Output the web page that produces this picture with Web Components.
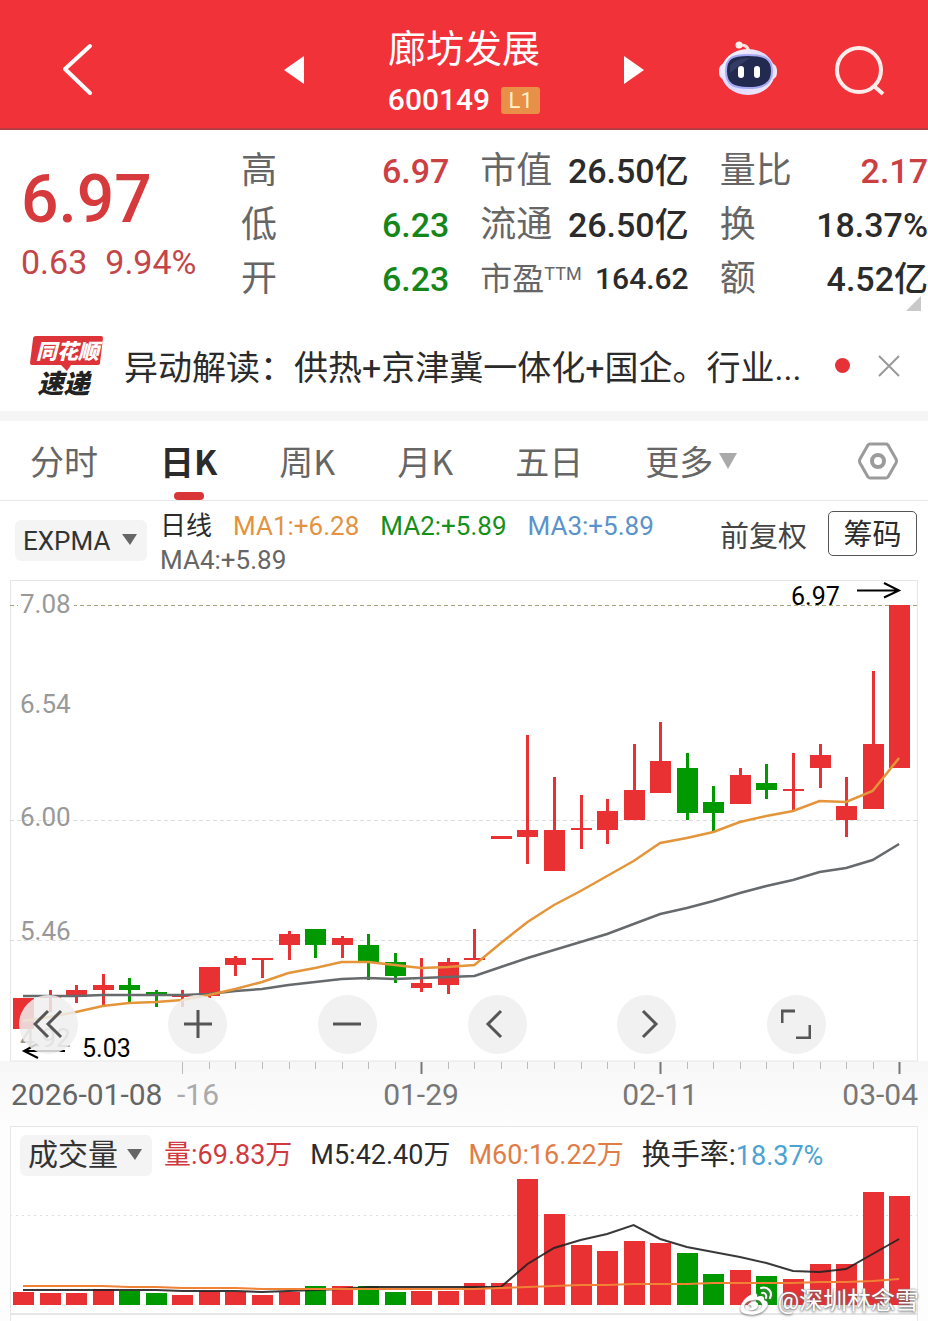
<!DOCTYPE html>
<html lang="zh-CN">
<head>
<meta charset="utf-8">
<meta name="viewport" content="width=device-width, initial-scale=1">
<title>廊坊发展 600149</title>
<style>
  body { margin: 0; background: #fff; color: #2b2b2b; font-family: Roboto, "Noto Sans CJK SC", sans-serif; }
</style>
</head>
<body>
<stock-app></stock-app>

<script>
const RED = '#e93033', GREEN = '#009a00';
const reset = `
  *, *::before { box-sizing: border-box; }
  button, select { font: inherit; color: inherit; background: none; border: 0; padding: 0; margin: 0; cursor: pointer; }
  svg { display: block; }
`;

function define(name, css, html, connected) {
  const template = document.createElement('template');
  template.innerHTML = `<style>${reset}${css}</style>${html}`;
  customElements.define(name, class extends HTMLElement {
    constructor() {
      super();
      this.attachShadow({ mode: 'open' }).append(template.content.cloneNode(true));
    }
    connectedCallback() { if (connected) connected.call(this, this.shadowRoot); }
  });
}

/* Red title bar */
define('stock-header', `
  :host { display: block; background: #f13239; color: #fff; border-bottom: 2px solid #b93b42; }
  header { display: grid; grid-template-columns: 1fr auto 1fr; align-items: center; height: 128px; padding-top: 12px; }
  .back { justify-self: start; margin-left: 60px; }
  .mid { display: flex; align-items: center; gap: 84px; }
  .title { text-align: center; padding-top: 6px; }
  h1 { margin: 0; font-size: 38px; line-height: 54px; font-weight: 400; }
  .code { display: flex; align-items: center; justify-content: center; gap: 11px; font-size: 30px; line-height: 48px; font-weight: 500; }
  .lv { background: #e89048; color: #fff3c8; border-radius: 3px; width: 39px; font-size: 22px; line-height: 27px; font-weight: 400; }
  .tools { justify-self: end; display: flex; align-items: center; gap: 56px; margin-right: 42px; }
`, `
  <header>
    <button class="back" aria-label="返回"><svg width="36" height="56" viewBox="0 0 36 56" fill="none" stroke="#fff" stroke-width="4" stroke-linecap="round" stroke-linejoin="round"><path d="M30 4 5 27 30 51"/></svg></button>
    <div class="mid">
      <button aria-label="上一只"><svg width="20" height="30" viewBox="0 0 20 30" fill="#fff"><path d="M0 15 20 1V29Z"/></svg></button>
      <div class="title">
        <h1>廊坊发展</h1>
        <div class="code"><span>600149</span><span class="lv">L1</span></div>
      </div>
      <button aria-label="下一只"><svg width="20" height="30" viewBox="0 0 20 30" fill="#fff"><path d="M20 15 0 1V29Z"/></svg></button>
    </div>
    <div class="tools">
      <button aria-label="智能助手"><svg width="60" height="60" viewBox="0 0 60 60">
        <defs><linearGradient id="g" x1="0" y1="0" x2="1" y2="1"><stop offset="0" stop-color="#fff"/><stop offset=".5" stop-color="#dcd8ff"/><stop offset="1" stop-color="#f3ecff"/></linearGradient></defs>
        <path d="M21 5q9-1 10 7" fill="none" stroke="#ffdede" stroke-width="3"/><circle cx="21" cy="5" r="3.500" fill="#fff0ee"/>
        <rect x="1" y="23" width="58" height="17" rx="7" fill="#f1e6fb"/>
        <ellipse cx="30" cy="32" rx="27" ry="23" fill="url(#g)"/>
        <path d="M8 31C8 18 14 15 30 15s24 3 24 16-9 17-24 17S8 44 8 31Z" fill="#222a50" stroke="#a8a9f5" stroke-width="2"/>
        <path d="M12 26q5-8 20-8-9 6-20 15Z" fill="#343c63"/>
        <rect x="20" y="26" width="6" height="12" rx="3" fill="#fff"/><rect x="36" y="26" width="6" height="12" rx="3" fill="#fff"/>
      </svg></button>
      <button aria-label="搜索"><svg width="52" height="52" viewBox="0 0 52 52" fill="none" stroke="#ffeceb" stroke-width="4"><circle cx="25" cy="26" r="22"/><path d="m40 42 9 8"/></svg></button>
    </div>
  </header>
`);

/* One label/value pair of the quote grid */
define('quote-item', `
  :host { display: flex; justify-content: space-between; height: 54px; font-size: 34px; line-height: 54px; white-space: nowrap; }
  .label { color: #666; font-size: var(--label, 36px); }
  .value { font-weight: 500; font-size: var(--value, 34px); }
  ::slotted(sup) { font-size: 18px; vertical-align: 10px; line-height: 0; }
`, `<span class="label"><slot></slot></span><span class="value"><slot name="value"></slot></span>`);

define('quote-panel', `
  :host { display: block; }
  section { position: relative; display: grid; grid-template-columns: 210px repeat(3, minmax(0, 1fr)); column-gap: 31px; padding: 14px 0 14px; }
  .price { grid-row: span 3; padding: 16px 0 0 21px; color: #d63a3c; }
  .last { font-size: 66px; line-height: 80px; font-weight: 500; }
  .chg { display: flex; gap: 18px; font-size: 34px; line-height: 44px; white-space: nowrap; color: #c44549; }
  .up { color: #cb4043; } .down { color: #15861a; }
  .tight { --label: 32px; --value: 30px; }
  .corner { position: absolute; right: 7px; bottom: 9px; }
`, `
  <section>
    <div class="price"><div class="last">6.97</div><div class="chg"><span>0.63</span><span>9.94%</span></div></div>
    <quote-item>高<span slot="value" class="up">6.97</span></quote-item>
    <quote-item>市值<span slot="value">26.50亿</span></quote-item>
    <quote-item>量比<span slot="value" class="up">2.17</span></quote-item>
    <quote-item>低<span slot="value" class="down">6.23</span></quote-item>
    <quote-item>流通<span slot="value">26.50亿</span></quote-item>
    <quote-item>换<span slot="value">18.37%</span></quote-item>
    <quote-item>开<span slot="value" class="down">6.23</span></quote-item>
    <quote-item class="tight">市盈<sup>TTM</sup><span slot="value">164.62</span></quote-item>
    <quote-item>额<span slot="value">4.52亿</span></quote-item>
    <svg class="corner" width="15" height="15"><path d="M15 0V15H0Z" fill="#c9c9c9"/></svg>
  </section>
`);

/* News strip */
define('news-strip', `
  :host { display: block; border-bottom: 10px solid #f5f5f5; }
  section { display: flex; align-items: center; height: 91px; padding: 0 28px 0 29px; }
  .logo { position: relative; flex: none; width: 75px; height: 62px; margin-right: 20px; font-weight: 900; font-style: italic; line-height: 28px; text-align: center; }
  .logo svg { position: absolute; inset: 0; }
  .logo span { position: relative; display: block; }
  .a { color: #fff; font-size: 21px; line-height: 34px; padding-left: 2px; }
  .b { color: #222; font-size: 26px; line-height: 30px; padding-right: 6px; }
  a { flex: 1; min-width: 0; color: inherit; text-decoration: none; font-size: 34px; line-height: 50px; padding-top: 4px; white-space: nowrap; overflow: hidden; }
  i { flex: none; width: 15px; height: 15px; margin: 0 28px 0 24px; border-radius: 50%; background: #e63236; }
`, `
  <section>
    <div class="logo">
      <svg width="75" height="62" viewBox="0 0 75 62"><path d="M7 1H72q2 0 2 2L71 28q0 2-3 2H42l-4 6-6-6H3q-2 0-2-2L4 4q0-3 3-3Z" fill="#dc3439"/></svg>
      <span class="a">同花顺</span><span class="b">速递</span>
    </div>
    <a href="#">异动解读：供热+京津冀一体化+国企。行业...</a>
    <i></i>
    <button aria-label="关闭"><svg width="22" height="22" viewBox="0 0 22 22" stroke="#999" stroke-width="2"><path d="m1 1 20 20M21 1 1 21"/></svg></button>
  </section>
`);

/* Period tabs */
define('period-tabs', `
  :host { display: block; border-bottom: 1px solid #e8e8e8; }
  nav { display: flex; align-items: center; gap: 62px; height: 79px; padding: 0 30px; color: #666; font-size: 34px; font-family: "Noto Sans CJK SC", sans-serif; }
  button { position: relative; height: 79px; white-space: nowrap; }
  .on { color: #2b2b2b; font-weight: 700; }
  .on::before { content: ""; position: absolute; left: 50%; bottom: 0; width: 30px; height: 8px; margin-left: -15px; border-radius: 4px; background: #d93438; }
  .more { display: flex; align-items: center; gap: 6px; }
  .set { margin-left: auto; }
`, `
  <nav>
    <button>分时</button><button class="on" aria-current="true">日K</button><button>周K</button><button>月K</button><button>五日</button>
    <button class="more">更多<svg width="18" height="16"><path d="M0 0H18L9 16Z" fill="#aaa"/></svg></button>
    <button class="set" aria-label="设置"><svg width="40" height="40" viewBox="0 0 40 40" fill="none" stroke="#9b9b9b" stroke-width="3"><path d="M12 3H28Q29 3 30 4L38 18Q39 20 38 22L30 36Q29 37 28 37H12Q11 37 10 36L2 22Q1 20 2 18L10 4Q11 3 12 3Z"/><circle cx="20" cy="20" r="6" stroke-width="4"/></svg></button>
  </nav>
`);

/* Grey drop-down with a small arrow */
define('drop-down', `
  :host { display: block; position: relative; flex: none; }
  select { display: block; appearance: none; width: 132px; height: 41px; padding-left: 8px; border-radius: 6px; background: #f4f4f4; font-size: var(--size, 26px); color: #333; }
  svg { position: absolute; right: 10px; top: 14px; pointer-events: none; }
`, `<select></select><svg width="15" height="11"><path d="M0 0H15L8 11Z" fill="#666"/></svg>`,
function (root) {
  const select = root.querySelector('select');
  select.setAttribute('aria-label', this.getAttribute('label'));
  select.replaceChildren(new Option(this.getAttribute('value')));
});

define('ma-legend', `
  :host { display: block; }
  section { display: flex; height: 79px; padding: 0 11px 0 15px; font-size: 26px; }
  drop-down { margin: 19px 13px 0 0; }
  .vals { flex: 1; display: flex; flex-wrap: wrap; align-content: flex-start; column-gap: 21px; padding-top: 8px; line-height: 34px; white-space: nowrap; }
  .adj { margin: 12px 21px 0 0; font-size: 29px; line-height: 48px; height: 48px; color: #444; }
  .chips { width: 89px; height: 45px; margin-top: 10px; border: 1px solid #555; border-radius: 5px; font-size: 29px; line-height: 46px; }
`, `
  <section>
    <drop-down label="指标" value="EXPMA"></drop-down>
    <div class="vals"><span>日线</span><span style="color:#e39340">MA1:+6.28</span><span style="color:#15901a">MA2:+5.89</span><span style="color:#5a93cc">MA3:+5.89</span><span style="color:#666">MA4:+5.89</span></div>
    <button class="adj">前复权</button>
    <button class="chips">筹码</button>
  </section>
`);

/* Shared x scale of both charts */
const STEP = 26.55, X0 = 23;
const cx = i => X0 + i * STEP;
const points = (ys, dy) => ys.map((y, i) => `${cx(i).toFixed(1)},${y - dy}`).join(' ');

/* Candles: body top, body bottom, high, low, colour */
const candles = [
  [998,1029,998,1029,'r'],[996,998,990,1012,'r'],[990,997,985,1003,'r'],[985,990,974,1005,'r'],[985,990,978,1002,'g'],[992,996,990,1007,'g'],
  [995,997,990,1007,'r'],[967,996,967,998,'r'],[958,965,956,976,'r'],[958,960,958,978,'r'],[934,945,931,960,'r'],[929,945,929,958,'g'],
  [938,945,936,958,'r'],[945,962,934,980,'g'],[962,976,953,983,'g'],[983,988,958,992,'r'],[962,985,958,994,'r'],[958,960,929,960,'r'],
  [836,839,836,839,'r'],[830,837,735,864,'r'],[830,871,777,871,'r'],[828,830,795,849,'r'],[811,830,799,844,'r'],[790,820,744,820,'r'],
  [761,793,722,793,'r'],[768,813,753,820,'g'],[802,813,786,832,'g'],[775,804,768,804,'r'],[783,790,764,799,'g'],[789,791,753,811,'r'],
  [755,768,744,788,'r'],[806,820,777,837,'r'],[744,809,671,809,'r'],[605,768,605,768,'r']
];
const fast = [1021,1017,1012,1006,1003,1002,1000,995,989,982,973,968,962,962,965,968,967,965,943,922,905,891,876,861,843,838,832,822,816,811,801,802,791,758];
const slow = [996,996,996,995,995,995,995,994,991,989,985,982,979,978,979,978,977,976,967,958,950,942,934,924,914,908,901,893,886,880,872,868,860,844];

define('candle-chart', `
  :host { display: block; position: relative; }
  svg.plot { width: 100%; height: auto; }
  text { font-size: 26px; fill: #999; }
  .mark { font-size: 25px; fill: #000; }
  .date { font-size: 30px; fill: #777; }
  .tools { position: absolute; left: 2%; right: 11%; top: 76%; display: flex; justify-content: space-between; }
  .tools button { width: 59px; height: 59px; border-radius: 50%; background: rgba(238,238,238,.85); display: grid; place-items: center; }
`, `
  <svg class="plot" viewBox="0 0 928 546"></svg>
  <div class="tools"></div>
`, function (root) {
  const T = 580;
  let s = `<defs><linearGradient id="axis" x2="0" y2="1"><stop offset="0" stop-color="#f7f7f7"/><stop offset="1" stop-color="#fdfdfd"/></linearGradient></defs>
    <rect y="481" width="928" height="65" fill="url(#axis)"/><path d="M10 481V0H918V481Z" fill="#fff"/><path d="M10.500 481V.5H917.500V481Z" fill="none" stroke="#e6e6e6"/>
    <path d="M10 25.500H917" stroke="#aaa37c" stroke-dasharray="4 3"/>
    <path d="M10 240.500H917M10 360.500H917" stroke="#dcdcdc" stroke-dasharray="4 3"/>
    <rect x="18" y="10" width="56" height="28" fill="#fff"/>
    <text x="20" y="33">7.08</text><text x="20" y="133">6.54</text><text x="20" y="246">6.00</text><text x="20" y="360">5.46</text><text x="20" y="467">4.92</text>`;
  candles.forEach(([t, b, h, l, c], i) => {
    const fill = c === 'r' ? RED : GREEN, x = Math.round(cx(i));
    s += `<rect x="${x - 1}" y="${h - T}" width="3" height="${l - h}" fill="${fill}"/><rect x="${x - 10}" y="${t - T}" width="21" height="${b - t}" fill="${fill}"/>`;
  });
  s += `<polyline points="${points(slow, T)}" fill="none" stroke="#666a6c" stroke-width="2.500"/>
    <polyline points="${points(fast, T)}" fill="none" stroke="#e59539" stroke-width="2.500"/>
    <text class="mark" x="791" y="25">6.97</text><text class="mark" x="82" y="477">5.03</text>
    <path d="M857 10.500H898M884 3l15 7.500-15 7M65 471H25M37 464 24 471l14 7" fill="none" stroke="#000" stroke-width="2"/>`;
  for (let i = 6; i < 34; i++) {
    const major = i === 15 || i === 24 || i === 33, x = Math.round(cx(i));
    s += `<path d="M${x}.5 482v${major || i === 6 ? 12 : 7}" stroke="${major ? '#777' : '#bbb'}" stroke-width="${major ? 2 : 1}"/>`;
  }
  s += `<text class="date" x="11" y="525" style="fill:#666">2026-01-08</text><text class="date" x="177" y="525" style="fill:#aaa">-16</text>
    <text class="date" x="421" y="525" text-anchor="middle">01-29</text><text class="date" x="660" y="525" text-anchor="middle">02-11</text><text class="date" x="918" y="525" text-anchor="end">03-04</text>`;
  root.querySelector('.plot').innerHTML = s;
  const icons = [
    ['最早', 'M15 2 2 15 15 28M28 2 15 15 28 28'], ['放大', 'M15 1V29M1 15H29'], ['缩小', 'M1 15H29'],
    ['向左', 'M19 2 6 15 19 28'], ['向右', 'M11 2 24 15 11 28'], ['全屏', 'M1 14V2H14M29 16V29H15']
  ];
  root.querySelector('.tools').innerHTML = icons.map(([label, d]) =>
    `<button aria-label="${label}"><svg width="30" height="30" viewBox="0 0 30 30" fill="none" stroke="#555" stroke-width="3"><path d="${d}"/></svg></button>`).join('');
});

/* Volume: bar tops on a base of 1305 */
const bars = [1292,1293,1293,1289,1291,1293,1295,1291,1292,1295,1292,1286,1286,1286,1292,1291,1291,1283,1283,1179,1214,1245,1251,1241,1243,1253,1274,1270,1276,1279,1264,1264,1192,1196];
const greens = [4, 5, 11, 13, 14, 25, 26, 28];
const m5 = [1290,1290,1290,1290,1290,1290,1291,1291,1291,1292,1291,1290,1289,1287,1287,1287,1287,1287,1287,1264,1248,1240,1234,1225,1239,1247,1252,1257,1263,1271,1272,1269,1254,1239];
const m60 = [1286,1286,1286,1286,1287,1287,1288,1288,1288,1289,1289,1289,1289,1289,1289,1289,1289,1289,1288,1287,1286,1285,1285,1284,1284,1284,1283,1283,1283,1283,1282,1282,1281,1279];

define('volume-chart', `
  :host { display: block; position: relative; background: #fdfdfd; padding: 0 10px; }
  section { border: 1px solid #e6e6e6; background: #fff; height: 188px; overflow: hidden; }
  .legend { display: flex; align-items: center; gap: 18px; padding: 8px 0 0 9px; height: 48px; font-size: 27px; line-height: 38px; white-space: nowrap; --size: 30px; }
  drop-down { margin-right: -6px; }
  b { font-weight: 400; font-size: 29px; }
  svg.plot { width: calc(100% + 22px); height: auto; margin-left: -11px; }
  .next { height: 7px; border: 1px solid #e6e6e6; border-bottom: 0; background: #fff; }
  .sign { position: absolute; right: 9px; bottom: 2px; display: flex; align-items: center; gap: 4px; color: #fff; font-size: 24px; line-height: 36px; text-shadow: 0 1px 3px #666, 0 0 2px #888; }
  .sign svg { filter: drop-shadow(0 1px 1px #777); }
`, `
  <section>
    <div class="legend">
      <drop-down label="副图指标" value="成交量"></drop-down>
      <span style="color:#d0393d">量:69.83万</span><span>M5:42.40万</span><span style="color:#e07d47">M60:16.22万</span><span><b>换手率:</b><span style="color:#4aa3d3">18.37%</span></span>
    </div>
    <svg class="plot" viewBox="0 0 928 140"></svg>
  </section>
  <div class="next"></div>
  <div class="sign">
    <svg width="33" height="30" viewBox="0 0 33 30" fill="none" stroke="#fff"><path fill="#fff" stroke="none" fill-rule="evenodd" d="M12 8c3-2 6-1 5 3 4-2 8-1 7 3 4 1 5 5 2 8-4 6-13 8-20 6C0 27-1 22 2 17c2-4 6-7 10-9ZM13 14c-6 1-9 4-9 7 1 4 6 5 11 4s8-4 7-7c-1-4-5-5-9-4Z"/><path fill="#fff" stroke="none" fill-rule="evenodd" d="M12 16c4-1 7 1 6 4s-5 5-8 4c-4-2-3-7 2-8ZM10 19a2 2 0 1 0 1 3 2 2 0 0 0-1-3Z"/><path d="M21 2c7-2 12 4 9 10M22 7c3-1 5 2 4 5" stroke-width="2" stroke-linecap="round"/></svg>
    <span>@深圳林念雪</span>
  </div>
`, function (root) {
  const T = 1175;
  let s = `<path d="M10 40.500H917" stroke="#dedede" stroke-dasharray="2 4"/>`;
  bars.forEach((t, i) => {
    s += `<rect x="${Math.round(cx(i)) - 10}" y="${t - T}" width="21" height="${1305 - t}" fill="${greens.includes(i) ? GREEN : RED}"/>`;
  });
  s += `<polyline points="${points(m5, T)}" fill="none" stroke="#222" stroke-opacity=".9" stroke-width="2"/>
    <polyline points="${points(m60, T)}" fill="none" stroke="#f08236" stroke-width="2"/>`;
  root.querySelector('.plot').innerHTML = s;
});

define('stock-app', `:host { display: block; }`, `
  <stock-header></stock-header>
  <main>
    <quote-panel></quote-panel>
    <news-strip></news-strip>
    <period-tabs></period-tabs>
    <ma-legend></ma-legend>
    <candle-chart></candle-chart>
    <volume-chart></volume-chart>
  </main>
`);
</script>
</body>
</html>
